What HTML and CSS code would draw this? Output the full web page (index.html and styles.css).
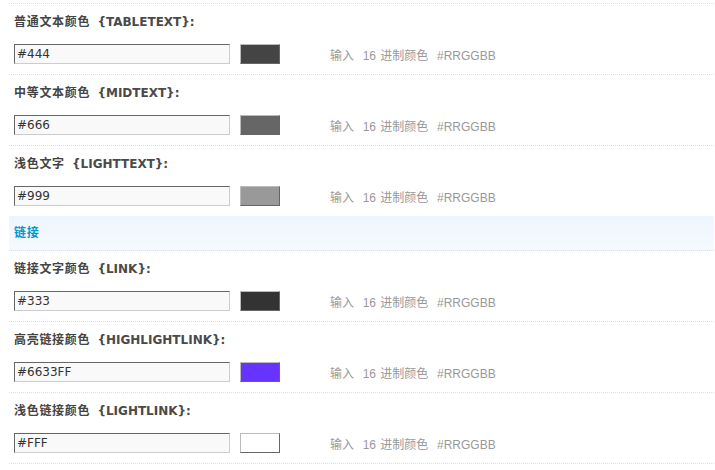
FILE: index.html
```html
<!DOCTYPE html>
<html>
<head>
<meta charset="utf-8">
<link rel="stylesheet" href="styles.css">
</head>
<body>
<div class="panel">
  <div class="row">
    <div class="label"><span class="cn">普通文本颜色</span> <span class="var">{TABLETEXT}:</span></div>
    <div class="field">
      <input class="text" type="text" value="#444">
      <span class="swatch" style="background:#444"></span>
      <span class="hint">输入&nbsp; 16 进制颜色&nbsp; #RRGGBB</span>
    </div>
  </div>
  <div class="row">
    <div class="label"><span class="cn">中等文本颜色</span> <span class="var">{MIDTEXT}:</span></div>
    <div class="field">
      <input class="text" type="text" value="#666">
      <span class="swatch" style="background:#666"></span>
      <span class="hint">输入&nbsp; 16 进制颜色&nbsp; #RRGGBB</span>
    </div>
  </div>
  <div class="row">
    <div class="label"><span class="cn">浅色文字</span> <span class="var">{LIGHTTEXT}:</span></div>
    <div class="field">
      <input class="text" type="text" value="#999">
      <span class="swatch" style="background:#999"></span>
      <span class="hint">输入&nbsp; 16 进制颜色&nbsp; #RRGGBB</span>
    </div>
  </div>
  <div class="section"><span class="cn">链接</span></div>
  <div class="row">
    <div class="label"><span class="cn">链接文字颜色</span> <span class="var">{LINK}:</span></div>
    <div class="field">
      <input class="text" type="text" value="#333">
      <span class="swatch" style="background:#333"></span>
      <span class="hint">输入&nbsp; 16 进制颜色&nbsp; #RRGGBB</span>
    </div>
  </div>
  <div class="row">
    <div class="label"><span class="cn">高亮链接颜色</span> <span class="var">{HIGHLIGHTLINK}:</span></div>
    <div class="field">
      <input class="text" type="text" value="#6633FF">
      <span class="swatch" style="background:#6633FF"></span>
      <span class="hint">输入&nbsp; 16 进制颜色&nbsp; #RRGGBB</span>
    </div>
  </div>
  <div class="row">
    <div class="label"><span class="cn">浅色链接颜色</span> <span class="var">{LIGHTLINK}:</span></div>
    <div class="field">
      <input class="text" type="text" value="#FFF">
      <span class="swatch" style="background:#FFF"></span>
      <span class="hint">输入&nbsp; 16 进制颜色&nbsp; #RRGGBB</span>
    </div>
  </div>
</div>
</body>
</html>
```
FILE: styles.css
```css
html, body {
  margin: 0;
  padding: 0;
  background: #fff;
}
body {
  padding-top: 3px;
  font-family: "DejaVu Sans", "Noto Sans CJK SC", sans-serif;
  font-size: 12px;
  color: #444;
}
.panel {
  margin: 0 1px 0 9px;
  border-top: 1px dotted #ddd;
}
.row {
  padding: 9px 5px 10px;
  border-bottom: 1px dotted #ddd;
}
.label {
  height: 18px;
  line-height: 18px;
  font-weight: bold;
  color: #444;
  white-space: nowrap;
}
.cn {
  letter-spacing: 0.7px;
}
.var {
  margin-left: 3px;
  color: #4a4a4a;
}
.field {
  display: flex;
  align-items: center;
  margin-top: 13px;
  height: 20px;
}
.text {
  box-sizing: border-box;
  width: 216px;
  height: 20px;
  margin: 0;
  padding: 0 2px 1px;
  border: 1px solid;
  border-color: #666 #ccc #ccc #666;
  background: #f9f9f9;
  font-family: "DejaVu Sans", "Liberation Sans", sans-serif;
  font-size: 12px;
  color: #333;
  outline: none;
}
.swatch {
  box-sizing: border-box;
  width: 40px;
  height: 20px;
  margin-left: 10px;
  border: 1px solid;
  border-color: #bbb #666 #666 #bbb;
}
.hint {
  margin-left: 50px;
  color: #999;
  font-size: 12px;
  font-family: "Liberation Sans", "Noto Sans CJK SC", sans-serif;
  word-spacing: 1px;
  white-space: nowrap;
}
.section {
  height: 34px;
  line-height: 34px;
  padding: 0 5px;
  margin-top: -1px;
  font-weight: bold;
  color: #09c;
  background: linear-gradient(#edf5fc, #f6fafe);
  border-bottom: 1px dotted #ddd;
}
```
